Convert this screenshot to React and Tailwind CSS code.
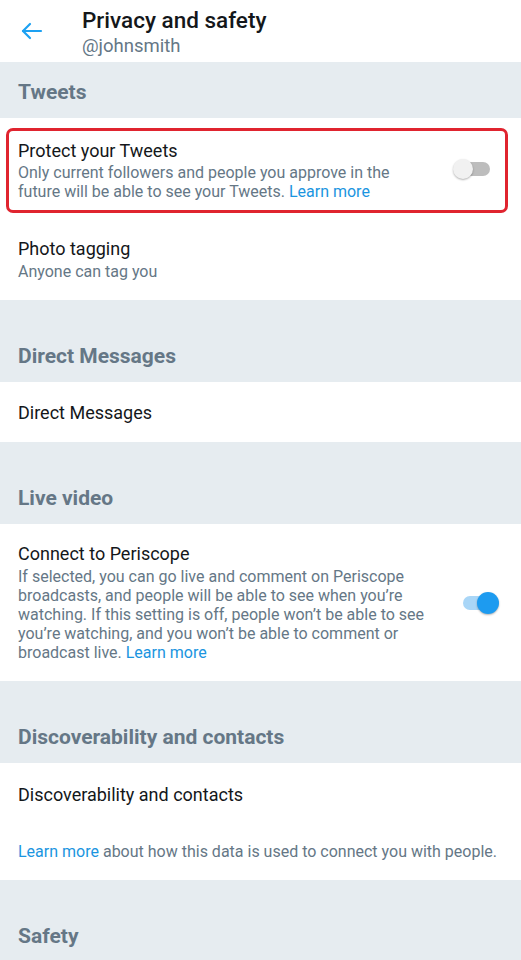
import React from "react";

const font = { fontFamily: "Roboto, 'Noto Sans', Arial, sans-serif" };

function Band({ title, first }) {
  return (
    <div className={`bg-[#e6ecf0] flex items-end px-[18px] pb-[13px] ${first ? "h-[56px]" : "h-[82px]"}`}>
      <span className="text-[21px] leading-[26px] font-bold text-[#657786]">{title}</span>
    </div>
  );
}

function ToggleOff() {
  return (
    <div className="relative w-[37px] h-[20px] shrink-0">
      <div className="absolute left-[4px] right-0 top-[3px] h-[14px] rounded-full bg-[#bdbdbd]" />
      <div className="absolute left-0 top-0 w-[20px] h-[20px] rounded-full bg-[#f1f1f1] shadow-[0_1px_2px_rgba(0,0,0,0.3)]" />
    </div>
  );
}

function ToggleOn() {
  return (
    <div className="relative w-[36px] h-[22px] shrink-0">
      <div className="absolute left-0 right-[3px] top-[4px] h-[14px] rounded-full bg-[#a9d6f7]" />
      <div className="absolute right-0 top-0 w-[22px] h-[22px] rounded-full bg-[#1d9bf0] shadow-[0_1px_2px_rgba(0,0,0,0.3)]" />
    </div>
  );
}

export default function App() {
  return (
    <div style={font} className="w-[521px] h-[960px] overflow-hidden bg-white text-[#14171a]">
      {/* Header */}
      <div className="h-[62px] flex items-start">
        <div className="w-[82px] h-[62px] flex items-center pl-[21px]">
          <svg width="22" height="18" viewBox="0 0 22 18" fill="none" stroke="#1da1f2" strokeWidth="2.2" strokeLinecap="round" strokeLinejoin="round">
            <path d="M20 9H2" />
            <path d="M9 2L2 9l7 7" />
          </svg>
        </div>
        <div className="pt-[6px] flex flex-col">
          <span className="text-[22.5px] leading-[28px] font-medium text-[#14171a]">Privacy and safety</span>
          <span className="mt-[1px] text-[18.5px] leading-[22px] text-[#657786]">@johnsmith</span>
        </div>
      </div>

      <Band title="Tweets" first />

      {/* Tweets section */}
      <div className="h-[182px] pt-[10px]">
        <div className="ml-[6px] w-[502px] h-[85px] border-[3px] border-[#e0242f] rounded-[7px] flex items-center pl-[9px]">
          <div className="w-[415px]">
            <div className="text-[18px] leading-[22px]">Protect your Tweets</div>
            <div className="mt-[1px] text-[16px] leading-[19px] text-[#657786]">
              Only current followers and people you approve in the future will be able to see your Tweets.{" "}
              <span className="text-[#1b95e0]">Learn more</span>
            </div>
          </div>
          <div className="ml-[20px] mt-[-3px]">
            <ToggleOff />
          </div>
        </div>
        <div className="px-[18px] pt-[25px]">
          <div className="text-[18px] leading-[22px]">Photo tagging</div>
          <div className="mt-[2px] text-[16px] leading-[19px] text-[#657786]">Anyone can tag you</div>
        </div>
      </div>

      <Band title="Direct Messages" />

      <div className="h-[60px] px-[18px] pt-[20px]">
        <div className="text-[18px] leading-[22px]">Direct Messages</div>
      </div>

      <Band title="Live video" />

      <div className="h-[157px] px-[18px] flex items-center">
        <div className="w-[415px]">
          <div className="text-[18px] leading-[22px]">Connect to Periscope</div>
          <div className="mt-[2px] text-[16px] leading-[19px] text-[#657786]">
            If selected, you can go live and comment on Periscope broadcasts, and people will be able to see when you’re watching. If this setting is off, people won’t be able to see you’re watching, and you won’t be able to comment or broadcast live.{" "}
            <span className="text-[#1b95e0]">Learn more</span>
          </div>
        </div>
        <div className="ml-[30px]">
          <ToggleOn />
        </div>
      </div>

      <Band title="Discoverability and contacts" />

      <div className="h-[117px] px-[18px] pt-[21px]">
        <div className="text-[18px] leading-[22px]">Discoverability and contacts</div>
        <div className="mt-[36px] text-[16px] leading-[19px] text-[#657786]">
          <span className="text-[#1b95e0]">Learn more</span> about how this data is used to connect you with people.
        </div>
      </div>

      <Band title="Safety" />
    </div>
  );
}
